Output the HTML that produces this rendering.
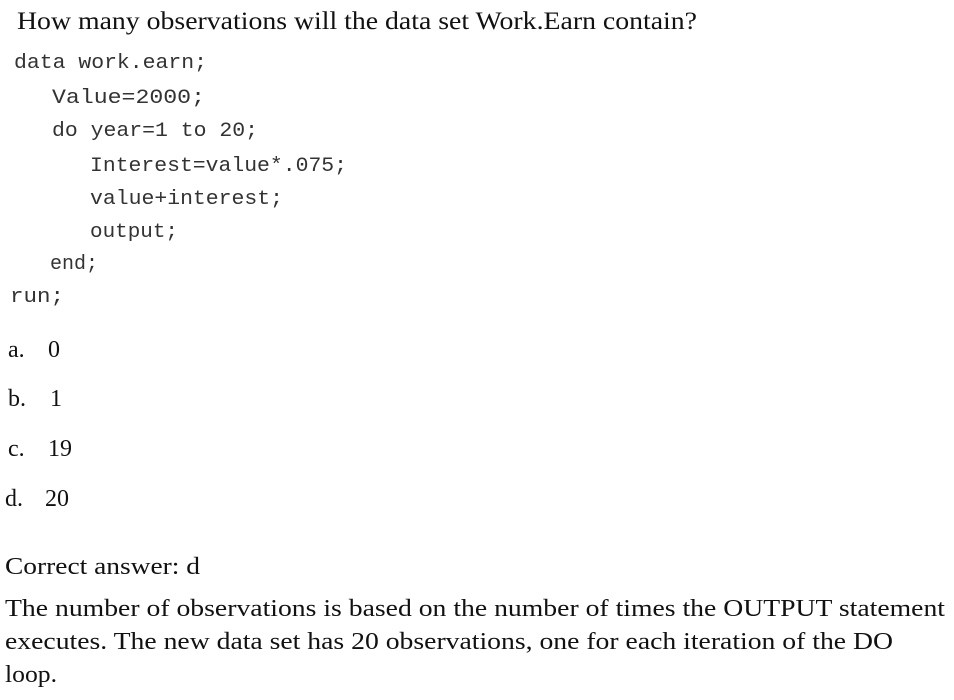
<!DOCTYPE html>
<html><head><style>html,body{margin:0;padding:0;background:#fff;width:954px;height:700px;overflow:hidden}</style></head>
<body>
<svg width="954" height="700" xmlns="http://www.w3.org/2000/svg">
<g font-family="Liberation Serif, serif" font-size="25" fill="#111">
<text x="17" y="29" textLength="680" lengthAdjust="spacingAndGlyphs">How many observations will the data set Work.Earn contain?</text>
</g>
<g font-family="Liberation Mono, monospace" font-size="20" fill="#333">
<text x="14" y="68" textLength="193" lengthAdjust="spacingAndGlyphs">data work.earn;</text>
<text x="52" y="103" textLength="153" lengthAdjust="spacingAndGlyphs">Value=2000;</text>
<text x="52" y="136" textLength="206" lengthAdjust="spacingAndGlyphs">do year=1 to 20;</text>
<text x="90" y="171" textLength="257" lengthAdjust="spacingAndGlyphs">Interest=value*.075;</text>
<text x="90" y="204" textLength="193" lengthAdjust="spacingAndGlyphs">value+interest;</text>
<text x="90" y="237" textLength="88" lengthAdjust="spacingAndGlyphs">output;</text>
<text x="50" y="269" textLength="48" lengthAdjust="spacingAndGlyphs">end;</text>
<text x="10" y="302" textLength="54" lengthAdjust="spacingAndGlyphs">run;</text>
</g>
<g font-family="Liberation Serif, serif" font-size="24" fill="#111">
<text x="8" y="357">a.</text><text x="48" y="357">0</text>
<text x="8" y="406">b.</text><text x="50" y="406">1</text>
<text x="8" y="456">c.</text><text x="48" y="456">19</text>
<text x="5" y="506">d.</text><text x="45" y="506">20</text>
<text x="5" y="574" textLength="195" lengthAdjust="spacingAndGlyphs">Correct answer: d</text>
<text x="5" y="616" textLength="940" lengthAdjust="spacingAndGlyphs">The number of observations is based on the number of times the OUTPUT statement</text>
<text x="5" y="649" textLength="888" lengthAdjust="spacingAndGlyphs">executes. The new data set has 20 observations, one for each iteration of the DO</text>
<text x="5" y="682" textLength="52" lengthAdjust="spacingAndGlyphs">loop.</text>
</g>
</svg>
</body></html>
